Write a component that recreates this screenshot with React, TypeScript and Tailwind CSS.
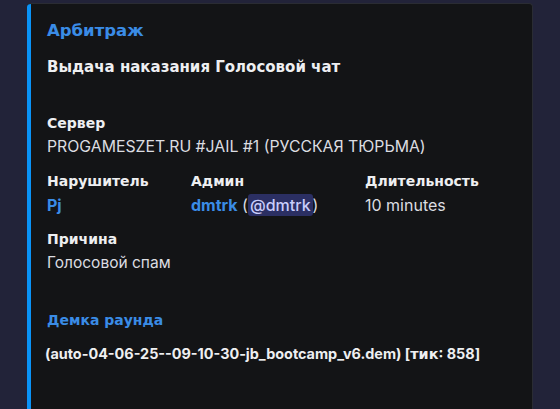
const CY = { fontFamily: '"DejaVu Sans", Verdana, sans-serif' };

function B({ children }: { children: React.ReactNode }) {
  return <span className="font-bold" style={CY}>{children}</span>;
}

export default function App() {
  return (
    <div className="w-[560px] h-[409px] bg-[#222339] overflow-hidden pt-[3px] pl-[27px]" style={{ fontFamily: 'Inter, "Noto Sans", sans-serif' }}>
      <div className="flex w-[506px] h-[410px] rounded-[4px] overflow-hidden bg-[#131416] border border-l-0 border-[#2a2c33]">
        <div className="w-[4px] shrink-0 bg-[#0a93f8]" />
        <div className="flex flex-col pl-[16px] pt-[15px] text-[16px] leading-[20px] text-[#dcdde1]">
          <div className="text-[16.5px] leading-[22px] text-[#3a8ce6]"><B>Арбитраж</B></div>
          <div className="mt-[16px] text-[15px] leading-[18px] text-[#eeeff1]"><B>Выдача наказания Голосовой чат</B></div>
          <div className="mt-[37px] text-[14px] text-[#eeeff1]"><B>Сервер</B></div>
          <div className="mt-[4px] text-[15.8px]">PROGAMESZET.RU #JAIL #1 (РУССКАЯ ТЮРЬМА)</div>
          <div className="mt-[14px] grid grid-cols-[144px_174px_140px]">
            <div>
              <div className="text-[14px] text-[#eeeff1]"><B>Нарушитель</B></div>
              <div className="mt-[4px] font-bold text-[#3a8ce6]">Pj</div>
            </div>
            <div>
              <div className="text-[14px] text-[#eeeff1]"><B>Админ</B></div>
              <div className="mt-[4px]">
                <span className="font-bold text-[#3a8ce6]">dmtrk</span>
                <span> (</span>
                <span className="bg-[#2b2f63] text-[#c9cdfb] rounded-[3px] px-[2px] py-[1px] font-medium">@dmtrk</span>
                <span>)</span>
              </div>
            </div>
            <div>
              <div className="text-[14px] text-[#eeeff1]"><B>Длительность</B></div>
              <div className="mt-[4px]">10 minutes</div>
            </div>
          </div>
          <div className="mt-[14px] text-[14px] text-[#eeeff1]"><B>Причина</B></div>
          <div className="mt-[4px] text-[15.5px]">Голосовой спам</div>
          <div className="mt-[37px] text-[#3a8ce6] text-[14px]"><B>Демка раунда</B></div>
          <div className="mt-[14px] -ml-[2px] font-bold text-[14.4px] text-[#eeeff1]">(auto-04-06-25--09-10-30-jb_bootcamp_v6.dem) [<B>тик</B>: 858]</div>
        </div>
      </div>
    </div>
  );
}
